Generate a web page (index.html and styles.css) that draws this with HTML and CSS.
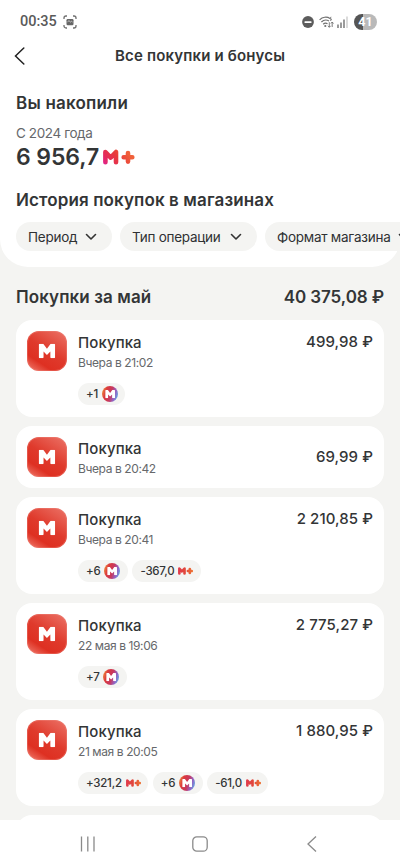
FILE: index.html
```html
<!DOCTYPE html>
<html lang="ru">
<head>
<meta charset="utf-8">
<meta name="viewport" content="width=device-width, initial-scale=1">
<title>Все покупки и бонусы</title>
<link rel="stylesheet" href="styles.css">
</head>
<body>
<svg class="defs" width="0" height="0" aria-hidden="true">
  <defs>
    <linearGradient id="plusGrad" gradientUnits="userSpaceOnUse" x1="0" y1="16" x2="22" y2="0">
      <stop offset="0" stop-color="#e0219a"/><stop offset=".25" stop-color="#e42a5c"/><stop offset=".6" stop-color="#e83a3c"/><stop offset="1" stop-color="#f0603a"/>
    </linearGradient>
    <linearGradient id="miniGrad" gradientUnits="userSpaceOnUse" x1="0" y1="0" x2="32" y2="0">
      <stop offset="0" stop-color="#e03a4c"/><stop offset=".5" stop-color="#e2483a"/><stop offset="1" stop-color="#ee7636"/>
    </linearGradient>
    <linearGradient id="coinGrad" x1="0" y1=".3" x2="1" y2=".6">
      <stop offset="0" stop-color="#f0873a"/><stop offset=".25" stop-color="#da3a3e"/><stop offset=".55" stop-color="#c8385e"/><stop offset=".8" stop-color="#9463c4"/><stop offset="1" stop-color="#65a5e0"/>
    </linearGradient>
    <linearGradient id="appGrad" x1=".1" y1="1" x2=".75" y2="0">
      <stop offset="0" stop-color="#ee7466"/><stop offset=".25" stop-color="#de3022"/><stop offset=".55" stop-color="#df3a2c"/><stop offset="1" stop-color="#e9685c"/>
    </linearGradient>
    <symbol id="m" viewBox="0 0 16 15" preserveAspectRatio="none"><path d="M.8 0H4.400L8 5.200 11.600 0H15.200L16 .8V14.200L15.200 15H12L11.300 14.200V8L8 11.600 4.700 8V14.200L4 15H.8L0 14.200V.8Z"/></symbol>
    <symbol id="app" viewBox="0 0 40 40"><rect width="40" height="40" rx="12" fill="url(#appGrad)"/><rect x=".5" y=".5" width="39" height="39" rx="11.500" fill="none" stroke="#f08a80" stroke-opacity=".4"/><use href="#m" x="11.700" y="12.800" width="16.500" height="14.500" fill="#fff"/></symbol>
    <symbol id="coin" viewBox="0 0 16 16"><circle cx="8" cy="8" r="8" fill="url(#coinGrad)"/><use href="#m" x="3.200" y="4" width="9.800" height="8.300" fill="#fff"/></symbol>
    <symbol id="mplus" viewBox="0 0 32 16"><path d="M2.400 13.200V3L7.700 8.600 13 3V13.200M20.700 8.300H29.300M25 4V12.600" fill="none" stroke="url(#plusGrad)" stroke-width="4.600" stroke-linecap="round" stroke-linejoin="round"/></symbol>
    <symbol id="mini" viewBox="0 0 32 16"><path d="M2.900 13.200V2.800L8.400 8.800 13.900 2.800V13.200M21 8H29.300M25.200 3.800V12.200" fill="none" stroke="url(#miniGrad)" stroke-width="5.600" stroke-linecap="round" stroke-linejoin="round"/></symbol>
    <symbol id="down" viewBox="0 0 12 8"><path d="M1.500 1.500L6 6 10.500 1.500" fill="none" stroke="#333" stroke-width="1.600" stroke-linecap="round" stroke-linejoin="round"/></symbol>
  </defs>
</svg>
<div class="screen">
  <header class="top">
    <div class="status">
      <span class="clock">00:35</span>
      <svg class="shot" width="14" height="14" viewBox="0 0 14 14"><path d="M1 4V3a2 2 0 0 1 2-2h1M10 1h1a2 2 0 0 1 2 2v1M13 10v1a2 2 0 0 1-2 2h-1M4 13H3a2 2 0 0 1-2-2v-1" fill="none" stroke="#707070" stroke-width="1.300"/><rect x="3.500" y="4" width="7" height="6.200" rx="1.200" fill="#666"/><path d="M4.500 6.800L6 5.700 7.500 7 8.500 6.300 9.500 7" fill="none" stroke="#ddd" stroke-width=".8"/></svg>
      <span class="grow"></span>
      <svg width="12" height="12" viewBox="0 0 12 12"><circle cx="6" cy="6" r="5.900" fill="#5c5c5c"/><rect x="2.500" y="5.200" width="7" height="1.700" rx=".5" fill="#fff"/></svg>
      <svg class="wifi" width="15" height="12" viewBox="0 0 15 12"><path d="M.6 3.800C3.500.8 8 .5 11 2.400M2.400 6C4.800 3.700 7.500 3.500 10 5M4.200 8.200C5.700 6.800 7.100 6.800 8.500 7.800" fill="none" stroke="#707070" stroke-width="1.200"/><circle cx="6.300" cy="10" r="1.100" fill="#707070"/><path d="M10.300 6.200v5M8.900 9.800l1.400 1.500 1.400-1.500M13.200 11V6M11.900 7.500l1.300-1.500 1.300 1.500M12 .8l-1 2.200h1.500l-1 2" fill="none" stroke="#707070" stroke-width=".9"/></svg>
      <svg class="signal" width="11" height="12" viewBox="0 0 11 12"><path d="M1 8.500V12M4 6.500V12M7 3.500V12" stroke="#666" stroke-width="1.300"/><path d="M10 .5V12" stroke="#c8c8c8" stroke-width="1.300"/></svg>
      <span class="battery">41</span>
    </div>
    <div class="nav">
      <svg width="11" height="18" viewBox="0 0 11 18"><path d="M9.800 1L1.500 9 9.800 17" fill="none" stroke="#222" stroke-width="1.500" stroke-linecap="round"/></svg>
      <h1>Все покупки и бонусы</h1>
    </div>
    <h2 class="saved">Вы накопили</h2>
    <p class="since">С 2024 года</p>
    <div class="total"><span>6 956,7</span><svg width="32" height="16"><use href="#mplus"/></svg></div>
    <h2 class="history">История покупок в магазинах</h2>
    <div class="filters">
      <button class="f1"><span>Период</span><svg width="12" height="8"><use href="#down"/></svg></button>
      <button class="f2"><span>Тип операции</span><svg width="12" height="8"><use href="#down"/></svg></button>
      <button class="f3"><span>Формат магазина</span><svg width="12" height="8"><use href="#down"/></svg></button>
    </div>
  </header>
  <main>
    <div class="month"><h2>Покупки за май</h2><strong>40 375,08 ₽</strong></div>
    <section class="card">
      <svg class="logo"><use href="#app"/></svg>
      <div class="info"><h3>Покупка</h3><p>Вчера в 21:02</p><div class="tags"><span class="tag"><b>+1</b><svg class="coin"><use href="#coin"/></svg></span></div></div>
      <span class="price">499,98 ₽</span>
    </section>
    <section class="card short">
      <svg class="logo"><use href="#app"/></svg>
      <div class="info"><h3>Покупка</h3><p>Вчера в 20:42</p></div>
      <span class="price">69,99 ₽</span>
    </section>
    <section class="card">
      <svg class="logo"><use href="#app"/></svg>
      <div class="info"><h3>Покупка</h3><p>Вчера в 20:41</p><div class="tags"><span class="tag"><b>+6</b><svg class="coin"><use href="#coin"/></svg></span><span class="tag"><b>-367,0</b><svg class="mini"><use href="#mini"/></svg></span></div></div>
      <span class="price">2 210,85 ₽</span>
    </section>
    <section class="card">
      <svg class="logo"><use href="#app"/></svg>
      <div class="info"><h3>Покупка</h3><p>22 мая в 19:06</p><div class="tags"><span class="tag"><b>+7</b><svg class="coin"><use href="#coin"/></svg></span></div></div>
      <span class="price">2 775,27 ₽</span>
    </section>
    <section class="card">
      <svg class="logo"><use href="#app"/></svg>
      <div class="info"><h3>Покупка</h3><p>21 мая в 20:05</p><div class="tags"><span class="tag"><b>+321,2</b><svg class="mini"><use href="#mini"/></svg></span><span class="tag"><b>+6</b><svg class="coin"><use href="#coin"/></svg></span><span class="tag"><b>-61,0</b><svg class="mini"><use href="#mini"/></svg></span></div></div>
      <span class="price">1 880,95 ₽</span>
    </section>
    <section class="card"></section>
  </main>
  <footer>
    <svg width="16" height="16" viewBox="0 0 16 16"><path d="M1.500 .5V15.500M7.800 .5V15.500M14 .5V15.500" stroke="#8a8a8a" stroke-width="1.300"/></svg>
    <svg width="16" height="16" viewBox="0 0 16 16"><rect x=".8" y=".8" width="14.400" height="14.400" rx="4" fill="none" stroke="#8a8a8a" stroke-width="1.300"/></svg>
    <svg width="16" height="16" viewBox="0 0 16 16"><path d="M12 .5L4 8 12 15.500" fill="none" stroke="#8a8a8a" stroke-width="1.300"/></svg>
  </footer>
</div>
</body>
</html>
```

FILE: styles.css
```css
* { box-sizing: border-box; margin: 0; padding: 0; }
body { font-family: Inter, "Noto Sans", sans-serif; color: #333536; background: #fff; overflow: hidden; }
.defs { position: absolute; }
svg { display: block; flex: none; }
h1, h2, h3, p, span, strong { white-space: nowrap; }
.screen { width: 400px; height: 867px; display: flex; flex-direction: column; background: #f4f4f2; overflow: hidden; }

.top { height: 267px; flex: none; background: #fff; border-radius: 0 0 28px 28px; padding: 12px 0 0 16px; }
.status { display: flex; align-items: center; height: 19px; padding: 0 23px 0 4px; }
.clock { font: 500 14.500px/19px Roboto, sans-serif; color: #5a5a5a; }
.shot { margin-left: 6px; }
.grow { flex: 1; }
.wifi { margin-left: 5px; }
.signal { margin: 0 6px 0 3px; }
.battery { width: 23px; height: 16px; border-radius: 8px; background: linear-gradient(90deg, #555 41%, #b9b9b9 41%); color: #fff; font: 700 12.500px/16px Roboto, sans-serif; text-align: center; }
.nav { display: flex; align-items: center; height: 49px; margin-left: -2px; }
.nav h1 { flex: 1; font-size: 15px; font-weight: 600; line-height: 20px; letter-spacing: .16px; padding-left: 90px; }
.saved { font-size: 17px; font-weight: 600; line-height: 24px; letter-spacing: .2px; margin-top: 11px; }
.since { font-size: 13.500px; line-height: 18px; letter-spacing: -.4px; margin-top: 9px; color: #66686b; }
.total { display: flex; align-items: center; gap: 4px; height: 28px; font-size: 23px; font-weight: 600; line-height: 28px; letter-spacing: -.1px; margin-top: 1px; }
.history { font-size: 17px; font-weight: 600; line-height: 24px; letter-spacing: .12px; margin-top: 17px; }
.filters { display: flex; gap: 8px; margin-top: 10px; width: 384px; overflow: hidden; }
.filters button { border: 0; background: #f4f4f2; height: 29px; border-radius: 15px; display: flex; flex: none; align-items: center; justify-content: space-between; padding: 0 15px 0 12px; font: 400 13.500px/20px Inter, sans-serif; letter-spacing: -.25px; color: #2f3133; }
.f1 { width: 96px; }
.f2 { width: 137px; }
.filters .f3 { width: 160px; }

main { flex: 1; min-height: 0; overflow: hidden; padding: 18px 16px 0; }
.month { display: flex; justify-content: space-between; height: 24px; line-height: 24px; margin-bottom: 11px; }
.month h2 { font-size: 17px; font-weight: 600; letter-spacing: .1px; }
.month strong { font-size: 17px; font-weight: 600; letter-spacing: -.1px; }
.card { display: flex; height: 97px; margin-bottom: 9px; padding: 11px 12px 0 11px; border-radius: 16px; background: #fff; }
.logo { width: 40px; height: 40px; }
.info { flex: 1; padding-left: 11px; }
.info h3 { font-size: 15px; font-weight: 450; line-height: 24px; letter-spacing: .1px; }
.info p { font-size: 12px; line-height: 16px; letter-spacing: -.4px; color: #66686b; }
.tags { display: flex; gap: 4.500px; margin-top: 12px; }
.tag { display: flex; align-items: center; height: 22px; border-radius: 11px; background: #f4f4f2; padding: 0 7.500px 0 8px; gap: 4px; }
.tag b { font-size: 11.500px; font-weight: 500; letter-spacing: -.25px; }
.coin { width: 16px; height: 16px; }
.mini { width: 15px; height: 8px; }
.price { font-size: 15px; font-weight: 450; line-height: 21px; letter-spacing: .07px; margin-right: -1px; }
.short { height: 62px; }
.short .price { line-height: 40px; }

footer { height: 47px; flex: none; background: #fff; display: flex; justify-content: space-between; align-items: center; padding: 0 80px; }
```
